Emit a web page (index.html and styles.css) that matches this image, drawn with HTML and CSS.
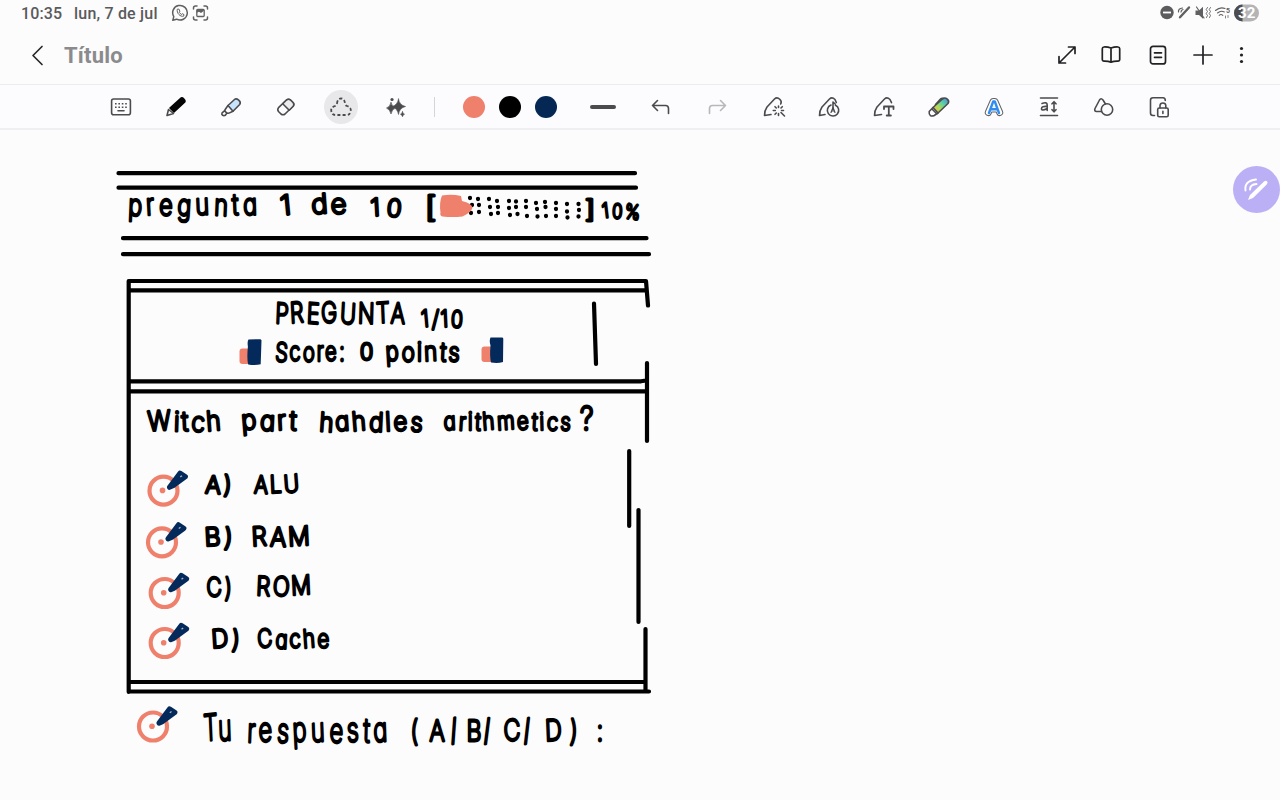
FILE: index.html
```html
<!DOCTYPE html>
<html lang="es">
<head>
<meta charset="utf-8">
<title>Título</title>
<link rel="stylesheet" href="styles.css">
</head>
<body>
<div class="app">
<header class="status">
  <span class="clock">10:35</span><span class="date">lun, 7 de jul</span>
  <svg class="status-left" width="40" height="18" viewBox="0 0 40 18"><g fill="none" stroke="#606062" stroke-width="1.5" stroke-linecap="round" stroke-linejoin="round"><path d="M1.8 16.2 2.8 12.6A7.3 7.3 0 1 1 5.6 15.2Z"/><path d="M6.2 5.6C5.4 9.2 9.4 13.1 12.6 12.2L13 10.600 11.300 9.700 10.300 10.500 8.200 8.300 8.900 7.200 8 5.400Z" stroke-width="1"/><path d="M22.500 5V4Q22.500 2 24.500 2H26M33 2h1.500q2 0 2 2v1M36.500 13v1q0 2-2 2h-1.500M26 16h-1.500q-2 0-2-2v-1"/></g><rect x="25.800" y="5.500" width="7.400" height="7" rx="1" fill="none" stroke="#606062" stroke-width="1.300"/><path d="M25.800 8.700 28 7.700 30 9l2.800-2V5.500h-7Z" fill="#606062"/></svg>
  <svg class="status-right" width="102" height="20" viewBox="0 0 102 20"><circle cx="8" cy="9.500" r="6.700" fill="#5c5c5e"/><path d="M4 9.500h8" stroke="#fff" stroke-width="1.800"/><g fill="none" stroke="#606062" stroke-width="1.200" stroke-linecap="round"><path d="m21 14.300 9-9.800" stroke-width="2.400"/><path d="M19.500 9q-.5-3.500 4-4M22 9q0-2 2-2.500"/><path d="m37.500 4 7.500 11"/><path d="M48.500 4.500l-1.300 2 1.300 2-1.300 2 1.300 2-1 2M51.500 4.500l-1.300 2 1.300 2-1.300 2 1.300 2-1 2" stroke-width=".9"/><path d="M56.500 7.500Q61 3.500 66 5.500M58.500 10Q62 7.200 65.300 9M60.200 12.300q1.800-1.500 3.600 0" stroke-width="1.100"/><path d="m66.500 13 0 2M69 12.500V14.500" stroke-width=".8"/></g><path d="M36.500 7.500h3.500l4-3.800v12L40 12h-3.500Z" fill="#606062"/><text x="67" y="9.500" class="wifi">5</text><rect x="75" y="1.500" width="25" height="17" rx="8.500" fill="#b4b4b6"/><path d="M83.500 1.500a8.500 8.500 0 0 0 0 17Z" fill="#4c4c50"/><text x="87.700" y="15.300" class="battery">32</text></svg>
</header>
<div class="titlebar">
  <svg width="14" height="24" viewBox="0 0 14 24" fill="none" stroke="#29292b" stroke-width="1.700" stroke-linecap="round" stroke-linejoin="round"><path d="M11 3.500 2 12.500l9 9"/></svg>
  <h1>Título</h1>
  <nav class="actions">
    <svg width="24" height="24" viewBox="0 0 24 24"><path d="M4 20 20 4M13.500 4H20v6.500M4 13.500V20h6.500"/></svg>
    <svg width="24" height="24" viewBox="0 0 24 24"><path d="M12 5Q8.500 3.800 5 4 3.300 4.100 3.300 5.700V16.800q0 1.300 1.500 1.300 4-.2 7.200 1 3.200-1.200 7.200-1 1.500 0 1.500-1.300V5.700Q20.700 4.100 19 4 15.500 3.800 12 5ZM12 5v14"/></svg>
    <svg width="24" height="24" viewBox="0 0 24 24"><rect x="4.500" y="3.300" width="15" height="17.600" rx="2.500"/><path d="M8.500 9.800h7M8.500 14.300h7"/></svg>
    <svg width="24" height="24" viewBox="0 0 24 24"><path d="M12 3v18M3 12h18"/></svg>
    <svg width="24" height="24" viewBox="0 0 24 24"><g fill="#222" stroke="none"><circle cx="12.500" cy="5.500" r="1.600"/><circle cx="12.500" cy="12" r="1.600"/><circle cx="12.500" cy="18.500" r="1.600"/></g></svg>
  </nav>
</div>
<div class="toolbar">
  <button class="tool"><svg width="24" height="24" viewBox="0 0 24 24"><rect x="2.600" y="4" width="18.800" height="15.800" rx="2"/><path d="M6 8.800h12.500M6 12.200h12.500" stroke-dasharray="1.600 1.800" stroke-linecap="butt"/><path d="M9 15.800h6"/></svg></button>
  <button class="tool"><svg width="24" height="24" viewBox="0 0 24 24"><path d="M3 20.500 4.500 14.500 9.500 18.500Z"/><path d="M6 13 16.500 3.500Q18 2.200 19.800 4 21.700 6 20.500 7.200L10 17Z" fill="#050505" stroke="#050505"/></svg></button>
  <button class="tool"><svg width="24" height="24" viewBox="0 0 24 24"><path d="m9 10.500 6.500-6q1.700-1.400 4.200.7t1 4.300l-6.700 6.700Z" fill="#c8e3fc"/><path d="M9 10.500 6 14.800q-.3 1.700 1.200 2.700 1.500 1 2.800.6l4-1.900M6 15.300l-2.900 2.500q-.8 1.600.5 2.500 1.300.7 2.700 0l1.700-2.300"/></svg></button>
  <button class="tool"><svg width="24" height="24" viewBox="0 0 24 24"><path d="m4.500 12.700 8-7.700q2-1.500 4 0l2.500 2.500q1.500 2 0 3.700l-8 7.800q-2 1.500-4 0l-2.500-2.500q-1.500-2 0-3.800Z"/><path d="m8.700 8.700 6.500 6.500 4-4q1.400-2-.2-3.700l-2.500-2.500q-2-1.500-4 0Z" fill="#ececef"/></svg></button>
  <button class="tool selected"><svg width="24" height="24" viewBox="0 0 24 24"><path d="M8 8.500Q8.500 3.500 12 3.500t4 5q.2 2 2 2.500 4.500 1.500 3.700 5-.6 4-4 4H6.500q-3.600 0-4.200-4-.8-3.500 3.700-5 1.800-.5 2-2.500Z" stroke-dasharray="3 2.200" stroke-linecap="butt" stroke-width="1.800"/></svg></button>
  <button class="tool"><svg width="24" height="24" viewBox="0 0 24 24" class="solid"><path d="M14.500 4Q15.300 10 21.500 11.500 15.300 13 14.500 19.500 13.500 13.500 8 11.500 13.500 10 14.500 4ZM7 7.500Q8 12 11.500 13 8 14.200 7 19 6 14.500 2.500 13 6 12 7 7.500ZM18.500 16.700q.3 2 2 2.500-1.700.4-2 2.500-.4-2-2-2.500 1.600-.4 2-2.500Z" stroke="#4b4b4e" stroke-width=".6"/><circle cx="8" cy="4.500" r="1.600"/></svg></button>
  <span class="divider"></span>
  <span class="swatch coral"></span><span class="swatch black"></span><span class="swatch navy"></span>
  <span class="thickness"></span>
  <button class="tool"><svg width="24" height="24" viewBox="0 0 24 24"><path d="M8.500 5.500 3.500 10.500l5 5M3.500 10.500H16.500q3 0 3 3v5"/></svg></button>
  <button class="tool muted"><svg width="24" height="24" viewBox="0 0 24 24"><path d="m15.500 5.500 5 5-5 5M20.500 10.500H7.500q-3 0-3 3v5"/></svg></button>
  <button class="tool"><svg width="24" height="24" viewBox="0 0 24 24"><path d="M9 19.500 2.500 20.500q0-5 2.500-8.500L12.500 4Q15 1.500 18 4.500q2 2 .7 4.500"/><path d="m16.500 12.500 0-1.500M16.500 18.500v2M13.300 15.500h-2M19.500 15.500h2M14.300 13l-1.300-1.300M19 13l1.300-1.300M14.300 18l-1.300 1.300M19 17.500l3.500 3.500"/></svg></button>
  <button class="tool"><svg width="24" height="24" viewBox="0 0 24 24"><path d="M8 19.500 2.500 20.500q0-5 2.500-8.500L12.500 4Q15 1.500 18 4.500l1.300 3"/><path d="M14 10a5.700 5.700 0 1 0 4.500.2M16 13V7l2.200 2"/><path d="M16 12.500l-2 5M16 12.500l2 5M14.500 16h3" stroke-width="1.200"/></svg></button>
  <button class="tool"><svg width="24" height="24" viewBox="0 0 24 24"><path d="M9.500 19.500 2.500 20.500q0-5 2.500-8.500L12.500 4Q15 1.500 18 4.500l1.500 3.200"/><path d="M12 14v-2.500h9.500V14M16.800 11.500V20.500M14.700 20.500h4.200" stroke-width="1.800"/></svg></button>
  <button class="tool"><svg width="24" height="24" viewBox="0 0 24 24"><defs><linearGradient id="rainbow" x1="0" y1="1" x2="1" y2="0"><stop offset="0" stop-color="#e7a955"/><stop offset=".35" stop-color="#b5dc56"/><stop offset=".65" stop-color="#55d0a8"/><stop offset="1" stop-color="#527de0"/></linearGradient></defs><path d="m6 12.500 10-9q2-1.300 4.300.7t.7 4.300L11 18Z" fill="url(#rainbow)"/><path d="m6 12.500-3.800 4q-.3 3 1 3.800 1.500 1.400 4 .2L11 18M5 14l5 5M8.500 9.500l5-5.500q1-1 3-.5"/></svg></button>
  <button class="tool"><svg width="24" height="24" viewBox="0 0 24 24"><path d="m6.300 17.500 4.800-11h1.800l4.800 11M8.500 14h7" stroke="#626265" stroke-width="7"/><path d="m6.300 17.500 4.800-11h1.800l4.800 11M8.500 14h7" stroke="#fff" stroke-width="5"/><path d="m7 18 4.200-11.500h1.600L17 18M8.500 14.300h7" stroke="#318cf2" stroke-width="2.400"/></svg></button>
  <button class="tool"><svg width="24" height="24" viewBox="0 0 24 24"><path d="M3.500 3h17M3.500 20.500h17M17 7v9.500M15 8.800 17 6.700l2 2.100M15 14.700l2 2.100 2-2.100"/><path d="M5 8.500q5.200-2 5.200 1.500v5.500M10.200 11.500Q4.500 11 4.500 13.700T10.200 13.500"/></svg></button>
  <button class="tool"><svg width="24" height="24" viewBox="0 0 24 24"><path d="M9.500 16.500H4.500q-2.500-.3-1.500-3L7.500 5q1.500-2.500 3.500 0l2.500 4"/><circle cx="15" cy="14.500" r="5.700"/></svg></button>
  <button class="tool"><svg width="24" height="24" viewBox="0 0 24 24"><path d="M7.500 20.500H6Q3.500 20.500 3.500 18V5.300Q3.500 2.800 6 2.800h10Q18.300 2.800 18.300 5.500"/><rect x="10.700" y="13" width="10.500" height="8.700" rx="1.500"/><path d="M13 13v-2.500q.2-2.500 2.900-2.500t2.900 2.500V13M15.900 16.300v2.200"/></svg></button>
</div>
<main class="page">
<svg class="ink" width="1280" height="670" viewBox="0 130 1280 670">
  <defs>
    <g id="target"><circle r="14" fill="none" stroke="#ef806c" stroke-width="4.200"/><circle cx="-1" cy="-.3" r="2.800" fill="#ef806c"/><path d="M6-3.500 16.500-17.500 21.800-14 9.500-5Z" fill="#042a5b" stroke="#042a5b" stroke-width="5.200" stroke-linejoin="round"/><path d="m16.800-13.800 1.700-1.200" stroke="#a4b3c8" stroke-width="1.400"/></g>
  </defs>
  <g class="rules">
    <path d="M118.500 173.200H635M118.500 187.700H636M123 238.200H646.500M123 254.200H649"/>
    <path d="M128.700 692V281H646L648 305.500M130 290.300H646M594 303.500 596 364M130 381.300H641L646 380.500M130 391.300H647M647 363V441M629.200 451V526M638.500 510V622M645.500 629V690M130 682H645M128.700 691.500H649"/>
  </g>
  <path class="dots" d="M470 198h0M478 199h0M472 205h0M479 205h0M471 213h0M479 212h0M489 199h0M497 201h0M490 207h0M498 207h0M491 214h0M498 213h0M509 201h0M516 201.500h0M509 208h0M516 207h0M510 215h0M517.500 214h0M526 201h0M536 203h0M526 207h0M537 209h0M527 216h0M537.500 216.500h0M545 202h0M556 203h0M545.500 207h0M556 209h0M546 216h0M556 216h0M567 204h0M567 211.500h0M567.500 217.500h0M578.500 204h0M579 210h0M578.500 216.500h0"/>
  <path d="M442 195.500q10-1.500 19 .5l1 5q9.500 2 10.500 6.500-1 5-10 9-10 1-20 0-3-1-2-4-1.500-10 1.500-17" fill="#ef806c"/>
  <g fill="#ef806c"><rect x="239.500" y="348.500" width="13" height="15.500" rx="3"/><rect x="481.500" y="346.500" width="13" height="15.500" rx="3"/></g>
  <g fill="#042a5b"><path d="m248.500 339.500 12-.3 1 1-.8 24q-5 1.500-12.500.3-1.500-5-.3-18-.8-5 .6-7Z"/><path d="m490.500 337.500 12 0 .8 1-.3 23.500q-5 1.500-12 .5-1.500-6-.5-17-1.500-5 0-8Z"/></g>
  <use href="#target" x="163.500" y="490.700"/><use href="#target" x="162" y="542.300"/><use href="#target" x="164.700" y="593"/><use href="#target" x="164.700" y="643"/><use href="#target" x="153" y="726.500"/>
  <g class="hand">
    <text class="wide" x="128" y="215" font-size="29" textLength="134" lengthAdjust="spacingAndGlyphs" rotate="3 -4 2 4 -3 3 -3 -2">pregunta</text>
    <text x="281" y="215" font-size="27" textLength="14" lengthAdjust="spacingAndGlyphs" rotate="-5">1</text>
    <text x="312" y="214" font-size="27" textLength="38" lengthAdjust="spacingAndGlyphs" rotate="-4 -4">de</text>
    <text class="wide" x="371" y="216" font-size="24" textLength="36" lengthAdjust="spacingAndGlyphs" rotate="-3 5">10</text>
    <text x="425" y="217" font-size="28" textLength="15" lengthAdjust="spacingAndGlyphs">[</text>
    <text x="585" y="218" font-size="24" textLength="14" lengthAdjust="spacingAndGlyphs">]</text>
    <text x="603" y="218" font-size="20" textLength="39" lengthAdjust="spacingAndGlyphs" rotate="-8 3 6">10%</text>
    <text x="275" y="323" font-size="28" textLength="132" lengthAdjust="spacingAndGlyphs" rotate="3 -4 3 -3 4 2 -3 2">PREGUNTA</text>
    <text x="422" y="327" font-size="23" textLength="43" lengthAdjust="spacingAndGlyphs" rotate="-6 2 -3 3">1/10</text>
    <text x="275" y="361" font-size="26" textLength="72" lengthAdjust="spacingAndGlyphs" rotate="4 -3 3 0 -4 0">Score:</text>
    <text x="360" y="360" font-size="23" textLength="16" lengthAdjust="spacingAndGlyphs">0</text>
    <text x="386" y="361" font-size="26" textLength="76" lengthAdjust="spacingAndGlyphs" rotate="-4 3 0 -3 3 2">points</text>
    <text x="148" y="431" font-size="27" textLength="76" lengthAdjust="spacingAndGlyphs" rotate="-3 2 -3 4 -5">Witch</text>
    <text x="242" y="430" font-size="27" textLength="57" lengthAdjust="spacingAndGlyphs" rotate="-5 3 -3 2">part</text>
    <text x="319" y="431" font-size="26" textLength="106" lengthAdjust="spacingAndGlyphs" rotate="4 -4 -5 3 -3 -4 3">hahdles</text>
    <text x="444" y="430" font-size="24" textLength="129" lengthAdjust="spacingAndGlyphs" rotate="-3 4 0 3 -5 -4 -5 3 -2 3 2">arithmetics</text>
    <text x="580" y="430" font-size="32" textLength="16" lengthAdjust="spacingAndGlyphs">?</text>
    <text x="205" y="493" font-size="24" textLength="29" lengthAdjust="spacingAndGlyphs" rotate="3 3">A)</text>
    <text x="254" y="493" font-size="24" textLength="48" lengthAdjust="spacingAndGlyphs" rotate="2 -3 -5">ALU</text>
    <text x="205" y="546" font-size="25" textLength="30" lengthAdjust="spacingAndGlyphs" rotate="-3 4">B)</text>
    <text x="252" y="546" font-size="26" textLength="61" lengthAdjust="spacingAndGlyphs" rotate="-3 2 -3">RAM</text>
    <text x="207" y="597" font-size="26" textLength="27" lengthAdjust="spacingAndGlyphs" rotate="-4 2">C)</text>
    <text x="256" y="595" font-size="26" textLength="58" lengthAdjust="spacingAndGlyphs" rotate="3 4 -3">ROM</text>
    <text x="212" y="648" font-size="25" textLength="30" lengthAdjust="spacingAndGlyphs" rotate="-4 4">D)</text>
    <text x="258" y="648" font-size="25" textLength="74" lengthAdjust="spacingAndGlyphs" rotate="-5 3 -3 -5 -3">Cache</text>
    <text x="204" y="741" font-size="36" textLength="30" lengthAdjust="spacingAndGlyphs" rotate="-4 -3">Tu</text>
    <text class="wide" x="247" y="742" font-size="33" textLength="145" lengthAdjust="spacingAndGlyphs" rotate="3 -4 3 -4 -3 3 -4 2 -3">respuesta</text>
    <text transform="scale(.8 1)" y="741" font-size="29" x="513 537 564 583 605 630 655 682 712 746" rotate="0 0 -10 0 -6 -3 -7 -3 3 0">(A/B/C/D):</text>
  </g>
</svg>
<button class="pen-fab"><svg width="30" height="30" viewBox="0 0 30 30"><path d="m6 25 2-5L22 6.500q2-1.500 3.200 0 1 1.200-.5 3L11 23Z" fill="#fff"/><path d="M3.500 15.500Q2 6 14 4.500M8 14.500Q8 9.500 14.500 9" fill="none" stroke="#fff" stroke-width="1.900" stroke-linecap="round"/></svg></button>
</main>
</div>
</body>
</html>
```
FILE: styles.css
```css
* { box-sizing: border-box; }
body { margin: 0; background: #fcfcfc; font-family: Roboto, "Liberation Sans", sans-serif; }
.app { width: 1280px; height: 800px; overflow: hidden; display: flex; flex-direction: column; }
button { border: 0; padding: 0; background: none; }
svg { display: block; flex: none; }
.status { height: 26px; padding: 0 19px 0 21px; display: flex; align-items: center; font-size: 16px; font-weight: 500; color: #5a5a5c; }
.clock { width: 53px; letter-spacing: .1px; }
.date { width: 97px; white-space: nowrap; letter-spacing: .2px; }
.status-right { margin-left: auto; }
.wifi { font: 700 7px Roboto, sans-serif; fill: #606062; }
.battery { font: 700 15px Roboto, sans-serif; fill: #fff; text-anchor: middle; }
.titlebar { height: 58px; padding: 0 27px 0 31px; display: flex; align-items: center; }
.titlebar h1 { margin: 1px 0 0 19px; font-size: 22px; letter-spacing: .2px; font-weight: 700; color: #8b8b8d; }
.actions { margin-left: auto; display: grid; grid-template-columns: 44px 47px 45px 38px 24px; }
.actions svg { fill: none; stroke: #222224; stroke-width: 1.700; stroke-linecap: round; stroke-linejoin: round; }
.toolbar { height: 46px; padding: 1px 0 0 93px; border-top: 1px solid #ececef; border-bottom: 2px solid #efeff1; background: #fcfcff; display: flex; align-items: center; }
.tool { width: 55px; height: 34px; flex: none; display: flex; align-items: center; justify-content: center; }
.tool svg { fill: none; stroke: #4b4b4e; stroke-width: 1.600; stroke-linecap: round; stroke-linejoin: round; }
.tool .solid { fill: #4b4b4e; stroke: none; }
.selected { width: 34px; margin: 0 10.500px; border-radius: 50%; background: #e8e8ea; }
.muted { margin: 0 2px 0 1px; opacity: .38; }
.divider { width: 1px; height: 20px; margin: 0 28px 0 11px; background: #d5d5d8; }
.swatch { width: 22px; height: 22px; border-radius: 50%; margin-right: 14px; }
.coral { background: #ef806c; }
.black { background: #000; }
.navy { background: #042853; }
.thickness { width: 26px; height: 4px; border-radius: 2px; margin: 0 17px 0 19px; background: #4b4b4e; }
.page { position: relative; height: 670px; }
.rules { fill: none; stroke: #000; stroke-width: 4.200; stroke-linecap: round; stroke-linejoin: round; }
.dots { fill: none; stroke: #000; stroke-width: 4.300; stroke-linecap: round; }
.hand { font-family: Inter, "Open Sans", sans-serif; font-weight: 200; font-feature-settings: "cv11"; letter-spacing: 3px; fill: #000; stroke: #000; stroke-width: 2.900; stroke-linejoin: round; }
.wide { letter-spacing: 6px; }
.pen-fab { position: absolute; left: 1233px; top: 36px; width: 47px; height: 47px; border-radius: 50%; background: #bbb0f5; display: flex; align-items: center; justify-content: center; }
```
